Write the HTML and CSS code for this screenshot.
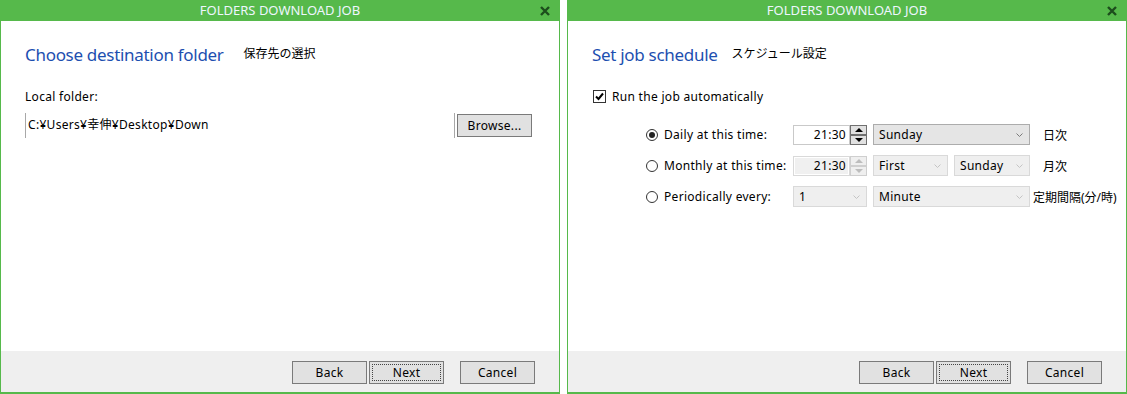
FILE: index.html
```html
<!DOCTYPE html>
<html lang="ja">
<head>
<meta charset="utf-8">
<title>Folders Download Job</title>
<link rel="stylesheet" href="styles.css">
</head>
<body>
<div class="screen">
  <section class="dialog">
    <header class="titlebar">
      <span class="title">FOLDERS DOWNLOAD JOB</span>
      <svg class="close" viewBox="0 0 10 10" aria-hidden="true"><path d="M1 1 L9 9 M9 1 L1 9"/></svg>
    </header>
    <div class="content">
      <div class="heading">
        <h1>Choose destination folder</h1>
        <span class="jp jp-folder">保存先の選択</span>
      </div>
      <div class="field-label">Local folder:</div>
      <div class="path-row">
        <div class="pathbox">C:¥Users¥幸伸¥Desktop¥Down</div>
        <button class="btn">Browse...</button>
      </div>
    </div>
    <footer class="footer">
      <button class="btn">Back</button>
      <button class="btn btn-focus">Next</button>
      <button class="btn btn-cancel">Cancel</button>
    </footer>
  </section>

  <section class="dialog">
    <header class="titlebar">
      <span class="title">FOLDERS DOWNLOAD JOB</span>
      <svg class="close" viewBox="0 0 10 10" aria-hidden="true"><path d="M1 1 L9 9 M9 1 L1 9"/></svg>
    </header>
    <div class="content">
      <div class="heading">
        <h1>Set job schedule</h1>
        <span class="jp jp-schedule">スケジュール設定</span>
      </div>
      <div class="check-row">
        <span class="checkbox"><svg viewBox="0 0 11 11"><path d="M2 5.5 L4.5 8 L9 2.5"/></svg></span>
        <span>Run the job automatically</span>
      </div>
      <div class="schedule">
        <div class="option"><span class="radio checked"></span><span>Daily at this time:</span></div>
        <div class="timebox">21:30</div>
        <div class="spin"><span class="spin-btn"><i class="up"></i></span><span class="spin-btn"><i class="down"></i></span></div>
        <div class="select span3">Sunday<svg class="chev" viewBox="0 0 7 4"><path d="M0.5 0.5 L3.5 3.5 L6.5 0.5"/></svg></div>
        <div class="suffix">日次</div>

        <div class="option"><span class="radio"></span><span>Monthly at this time:</span></div>
        <div class="timebox disabled">21:30</div>
        <div class="spin disabled"><span class="spin-btn"><i class="up"></i></span><span class="spin-btn"><i class="down"></i></span></div>
        <div class="select disabled col5">First<svg class="chev" viewBox="0 0 7 4"><path d="M0.5 0.5 L3.5 3.5 L6.5 0.5"/></svg></div>
        <div class="select disabled col7">Sunday<svg class="chev" viewBox="0 0 7 4"><path d="M0.5 0.5 L3.5 3.5 L6.5 0.5"/></svg></div>
        <div class="suffix">月次</div>

        <div class="option"><span class="radio"></span><span>Periodically every:</span></div>
        <div class="select disabled span2">1<svg class="chev" viewBox="0 0 7 4"><path d="M0.5 0.5 L3.5 3.5 L6.5 0.5"/></svg></div>
        <div class="select disabled span3">Minute<svg class="chev" viewBox="0 0 7 4"><path d="M0.5 0.5 L3.5 3.5 L6.5 0.5"/></svg></div>
        <div class="suffix suffix-tight">定期間隔(分/時)</div>
      </div>
    </div>
    <footer class="footer">
      <button class="btn">Back</button>
      <button class="btn btn-focus">Next</button>
      <button class="btn btn-cancel">Cancel</button>
    </footer>
  </section>
</div>
</body>
</html>
```

FILE: styles.css
```css
html, body {
  margin: 0;
  padding: 0;
  background: #ffffff;
}

body {
  font-family: "Noto Sans", "Noto Sans CJK JP", sans-serif;
  font-size: 12px;
  letter-spacing: 0.3px;
  color: #000;
}

.screen {
  display: flex;
  gap: 7px;
  width: 1127px;
  height: 394px;
}

.dialog {
  width: 560px;
  height: 394px;
  box-sizing: border-box;
  border: 1px solid #56b94b;
  border-top: 0;
  border-bottom-width: 2px;
  display: flex;
  flex-direction: column;
  background: #fff;
}

.titlebar {
  height: 21px;
  flex: none;
  background: #56b94b;
  display: grid;
  grid-template-columns: 1fr auto 1fr;
  align-items: center;
}

.title {
  grid-column: 2;
  color: #eef6ff;
  font-size: 13px;
  letter-spacing: 0;
  line-height: 21px;
}

.close {
  grid-column: 3;
  justify-self: end;
  margin-right: 9px;
  width: 10px;
  height: 10px;
}

.close path {
  stroke: #1c4d1c;
  stroke-width: 2.4;
  fill: none;
}

.content {
  flex: 1;
  padding: 22px 0 0 24px;
}

.heading {
  display: flex;
  align-items: center;
  height: 24px;
}

h1 {
  margin: 0;
  font-size: 17px;
  letter-spacing: -0.3px;
  font-weight: normal;
  color: #1d4fb0;
  line-height: 24px;
}

.jp {
  font-size: 12px;
  letter-spacing: 0;
  line-height: 16px;
  margin-bottom: 2px;
}

.jp-folder {
  margin-left: 20px;
}

.jp-schedule {
  margin-left: 14px;
}

.field-label {
  margin-top: 22px;
  line-height: 16px;
}

.path-row {
  margin-top: 8px;
  display: flex;
  align-items: center;
  gap: 2px;
}

.pathbox {
  width: 430px;
  height: 25px;
  box-sizing: border-box;
  border-left: 1px solid #a8a8a8;
  border-right: 1px solid #a8a8a8;
  padding: 0 0 3px 2px;
  display: flex;
  align-items: center;
}

.btn {
  width: 75px;
  height: 23px;
  box-sizing: border-box;
  border: 1px solid #7a7a7a;
  background: #e1e1e1;
  font: inherit;
  letter-spacing: 0.3px;
  color: #000;
  padding: 0;
  margin: 0;
}

.btn-focus {
  outline: 1px dotted #444;
  outline-offset: -4px;
}

.footer {
  height: 41px;
  flex: none;
  box-sizing: border-box;
  background: #efefef;
  display: flex;
  justify-content: flex-end;
  align-items: flex-start;
  gap: 2px;
  padding: 10px 24px 0 0;
}

.btn-cancel {
  margin-left: 14px;
}

.check-row {
  margin-top: 21px;
  margin-left: 1px;
  height: 16px;
  display: flex;
  align-items: center;
  gap: 6px;
}

.checkbox {
  width: 13px;
  height: 13px;
  box-sizing: border-box;
  border: 1px solid #333;
  background: #fff;
  display: flex;
}

.checkbox svg {
  width: 11px;
  height: 11px;
}

.checkbox path {
  fill: none;
  stroke: #000;
  stroke-width: 2;
}

.schedule {
  margin-top: 20px;
  margin-left: 54px;
  display: grid;
  grid-template-columns: 147px 57px 17px 6px 75px 6px 76px auto;
  grid-auto-rows: 21px;
  row-gap: 10px;
  align-items: center;
}

.option {
  grid-column: 1;
  display: flex;
  align-items: center;
  gap: 6px;
}

.radio {
  width: 12px;
  height: 12px;
  box-sizing: border-box;
  border: 1px solid #333;
  border-radius: 50%;
  background: #fff;
  display: flex;
  align-items: center;
  justify-content: center;
}

.radio.checked::after {
  content: "";
  width: 6px;
  height: 6px;
  border-radius: 50%;
  background: #222;
}

.timebox {
  grid-column: 2;
  height: 20px;
  box-sizing: border-box;
  border: 1px solid #c9c9c9;
  background: #fff;
  text-align: right;
  padding-right: 3px;
  line-height: 18px;
}

.timebox.disabled {
  background: #f0f0f0;
  box-shadow: inset 0 0 0 1px #fff;
  border-color: #d9d9d9;
}

.spin {
  grid-column: 3;
  height: 20px;
  display: flex;
  flex-direction: column;
}

.spin-btn {
  height: 10px;
  box-sizing: border-box;
  border: 1px solid #707070;
  background: #e1e1e1;
  display: flex;
  align-items: center;
  justify-content: center;
}

.spin-btn i {
  width: 0;
  height: 0;
  border-left: 4px solid transparent;
  border-right: 4px solid transparent;
}

.spin-btn .up {
  border-bottom: 4px solid #000;
}

.spin-btn .down {
  border-top: 4px solid #000;
}

.spin.disabled .spin-btn {
  border-color: #cfcfcf;
  background: #efefef;
}

.spin.disabled .up {
  border-bottom-color: #bdbdbd;
}

.spin.disabled .down {
  border-top-color: #bdbdbd;
}

.select {
  height: 21px;
  box-sizing: border-box;
  border: 1px solid #acacac;
  background: #e5e5e5;
  padding: 0 6px 0 5px;
  display: flex;
  align-items: center;
  justify-content: space-between;
}

.select.disabled {
  background: #efefef;
  border-color: #d9d9d9;
}

.chev {
  width: 7px;
  height: 4px;
}

.chev path {
  fill: none;
  stroke: #7a7a7a;
  stroke-width: 1;
}

.select.disabled .chev path {
  stroke: #c4c4c4;
}

.span3 {
  grid-column: 5 / 8;
}

.span2 {
  grid-column: 2 / 4;
}

.col5 {
  grid-column: 5;
}

.col7 {
  grid-column: 7;
}

.suffix {
  grid-column: 8;
  padding-left: 13px;
  letter-spacing: 0;
  white-space: nowrap;
}

.suffix-tight {
  padding-left: 3px;
}
```
